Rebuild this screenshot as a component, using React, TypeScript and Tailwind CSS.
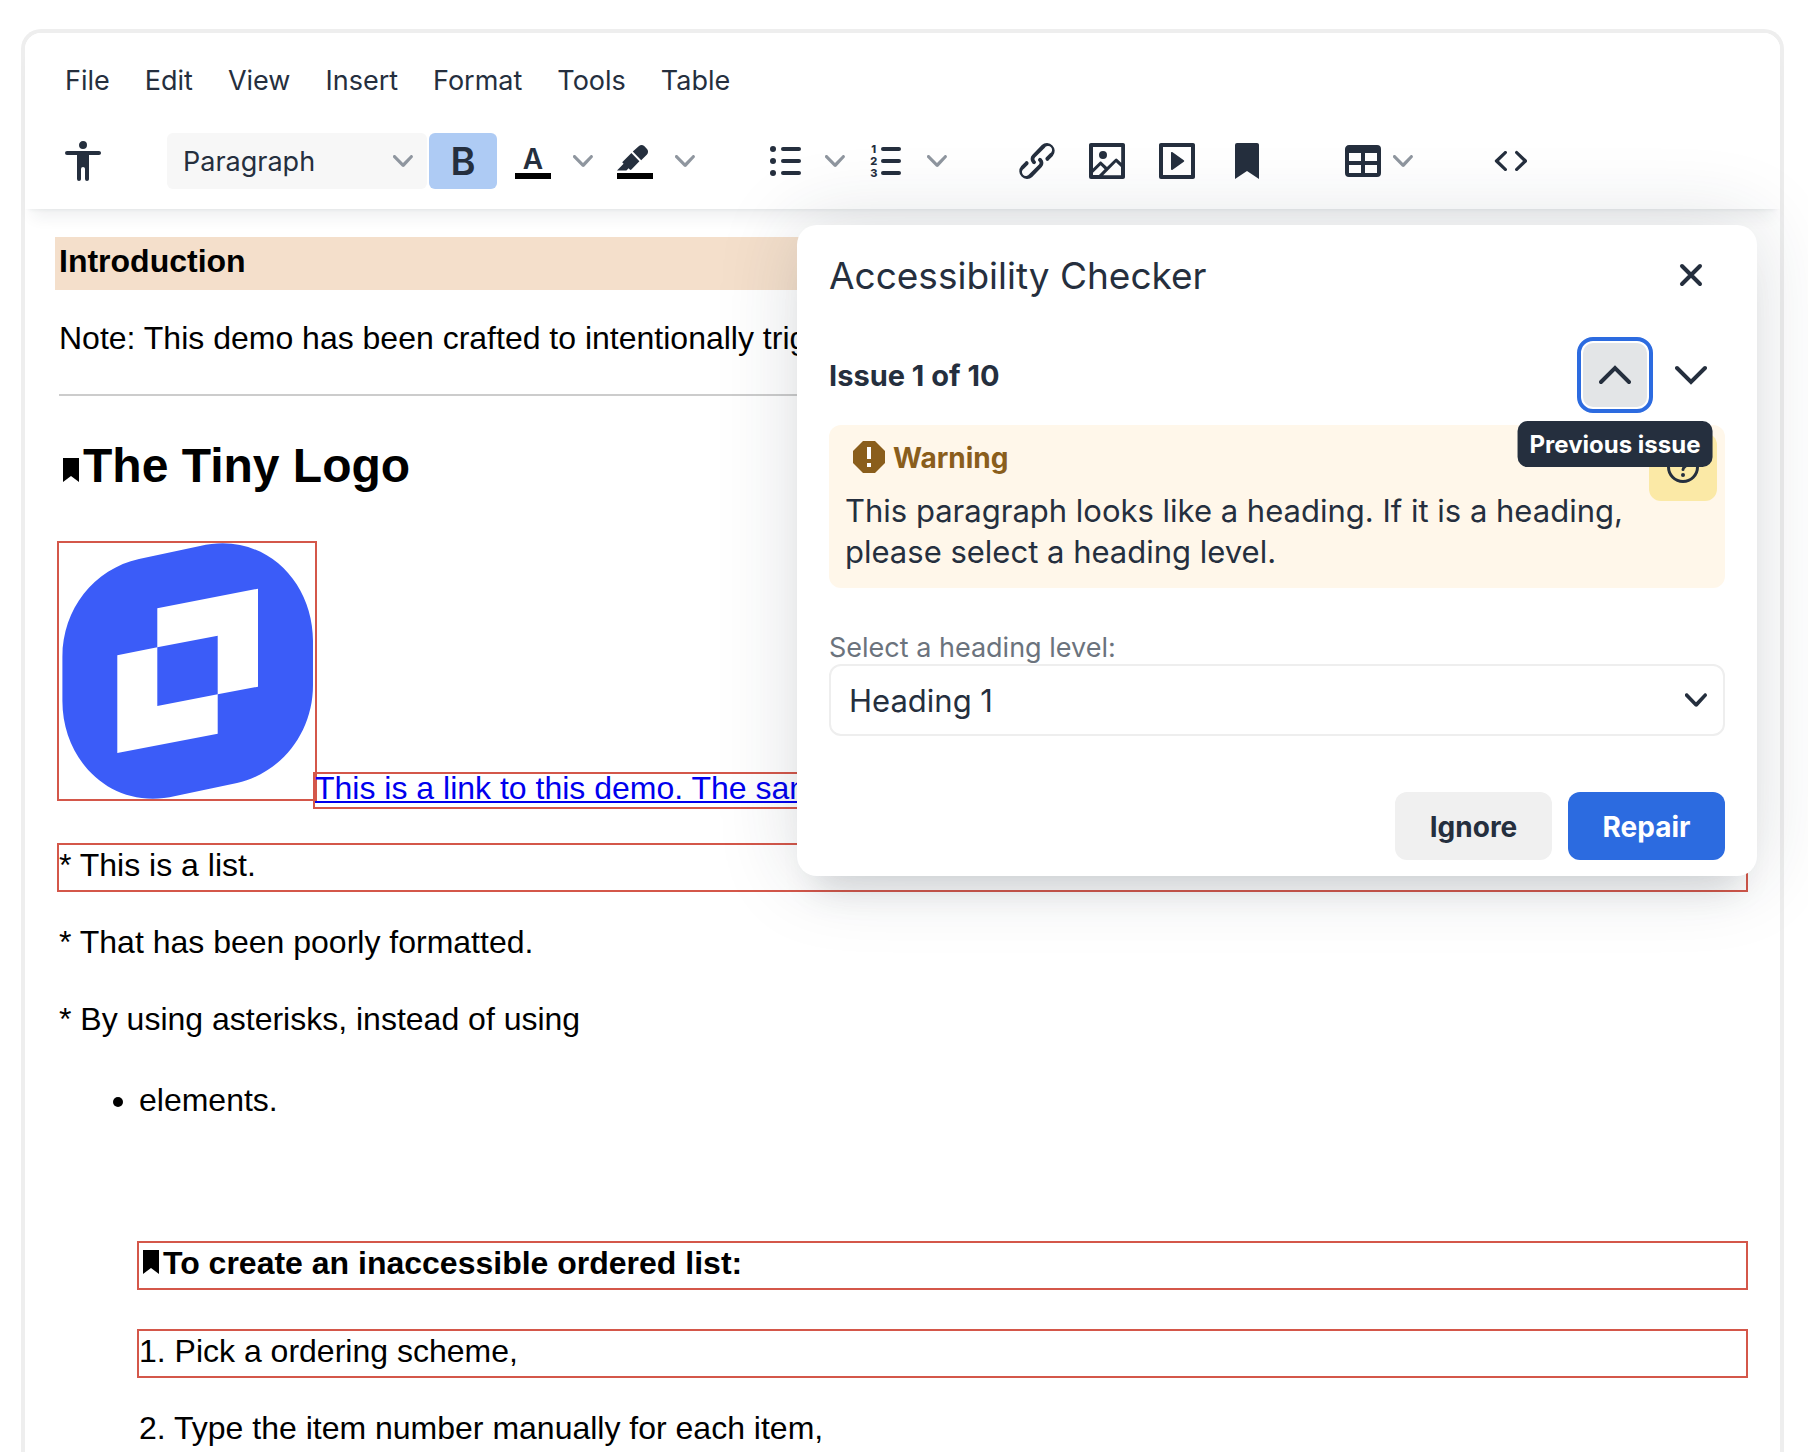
import type { ReactNode } from 'react';

const menus = ['File', 'Edit', 'View', 'Insert', 'Format', 'Tools', 'Table'];

function Chevron({ className }: { className: string }) {
  return (
    <svg viewBox="0 0 10 10" fill="currentColor" className={className} aria-hidden="true">
      <path d="M8.7 2.2c.3-.3.8-.3 1 0 .4.4.4.9 0 1.2L5.7 7.8c-.3.3-.9.3-1.2 0L.2 3.4a.8.8 0 0 1 0-1.2c.3-.3.8-.3 1.1 0L5 6l3.7-3.8Z" />
    </svg>
  );
}

function Icon({ children }: { children: ReactNode }) {
  return (
    <svg viewBox="0 0 24 24" fill="currentColor" fillRule="evenodd" className="size-12" aria-hidden="true">
      {children}
    </svg>
  );
}

function ToolButton({ label, active, children }: { label: string; active?: boolean; children: ReactNode }) {
  return (
    <button
      type="button"
      aria-label={label}
      aria-pressed={active}
      className={
        active
          ? 'flex h-14 w-[68px] items-center justify-center rounded-md bg-[#aecbf4]'
          : 'flex h-14 w-[68px] items-center justify-center rounded-md'
      }
    >
      {children}
    </button>
  );
}

function SplitButton({ label, children }: { label: string; children: ReactNode }) {
  return (
    <div className="flex">
      <ToolButton label={label}>{children}</ToolButton>
      <button type="button" aria-label={`${label} options`} className="flex h-14 w-8 items-center justify-center text-[#8f969f]">
        <Chevron className="size-5" />
      </button>
    </div>
  );
}

function Group({ children }: { children: ReactNode }) {
  return <div className="flex gap-0.5">{children}</div>;
}

function Toolbar() {
  return (
    <div className="flex gap-[50px] pb-5 pl-6">
      <Group>
        <ToolButton label="Accessibility checker">
          <Icon>
            <path d="M12 2a2 2 0 0 1 2 2 2 2 0 0 1-2 2 2 2 0 0 1-2-2c0-1.1.9-2 2-2Zm8 7h-5v12c0 .6-.4 1-1 1a1 1 0 0 1-1-1v-5c0-.6-.4-1-1-1a1 1 0 0 0-1 1v5c0 .6-.4 1-1 1a1 1 0 0 1-1-1V9H4a1 1 0 1 1 0-2h16c.6 0 1 .4 1 1s-.4 1-1 1Z" />
          </Icon>
        </ToolButton>
      </Group>
      <Group>
        <div className="relative">
          <select
            aria-label="Block format"
            className="h-14 w-[260px] appearance-none rounded-md bg-[#f7f7f7] pt-0.5 pl-4 text-[27px] leading-[34px]"
          >
            <option>Paragraph</option>
          </select>
          <Chevron className="pointer-events-none absolute top-[18px] right-3.5 size-5 text-[#8f969f]" />
        </div>
        <ToolButton label="Bold" active>
          <span className="text-[38px] leading-none font-semibold">B</span>
        </ToolButton>
        <SplitButton label="Text color">
          <span className="flex flex-col items-center pt-0.5">
            <span className="text-[28px] leading-7 font-semibold">A</span>
            <span className="h-1.5 w-9 bg-black" />
          </span>
        </SplitButton>
        <SplitButton label="Background color">
          <Icon>
            <path fill="#000" d="M3 18h18v3H3z" />
            <path d="M7.7 16.700H3l3.3-3.3-.7-.8L10.2 8l4 4.1-4 4.2c-.2.2-.6.2-.8 0l-.6-.7-1.1 1.1zM15.1 11.6 10.9 7.3 14 4.5a2 2 0 0 1 2.6 0L18 6c.7.7.7 2 0 2.700z" />
          </Icon>
        </SplitButton>
      </Group>
      <Group>
        <SplitButton label="Bullet list">
          <Icon>
            <rect x="10" y="5" width="10" height="2" rx="1" />
            <rect x="10" y="11" width="10" height="2" rx="1" />
            <rect x="10" y="17" width="10" height="2" rx="1" />
            <circle cx="6" cy="6" r="1.5" />
            <circle cx="6" cy="12" r="1.5" />
            <circle cx="6" cy="18" r="1.5" />
          </Icon>
        </SplitButton>
        <SplitButton label="Numbered list">
          <Icon>
            <rect x="9" y="5" width="10" height="2" rx="1" />
            <rect x="9" y="11" width="10" height="2" rx="1" />
            <rect x="9" y="17" width="10" height="2" rx="1" />
            <text x="5.4" y="8" fontSize="5.5" fontWeight="800" textAnchor="middle">1</text>
            <text x="5.4" y="14" fontSize="5.5" fontWeight="800" textAnchor="middle">2</text>
            <text x="5.4" y="20" fontSize="5.5" fontWeight="800" textAnchor="middle">3</text>
          </Icon>
        </SplitButton>
      </Group>
      <Group>
        <ToolButton label="Link">
          <Icon>
            <path d="M6.2 12.3a1 1 0 0 1 1.4 1.4l-2 2a2 2 0 1 0 2.6 2.8l4.8-4.8a1 1 0 0 0 0-1.4 1 1 0 1 1 1.4-1.3 2.9 2.9 0 0 1 0 4L9.6 20a3.9 3.9 0 0 1-5.5-5.5l2-2Zm11.6-.6a1 1 0 0 1-1.4-1.4l2-2a2 2 0 1 0-2.6-2.8L11 10.3a1 1 0 0 0 0 1.4A1 1 0 1 1 9.6 13a2.9 2.9 0 0 1 0-4L14.4 4a3.9 3.9 0 0 1 5.5 5.5l-2 2Z" />
          </Icon>
        </ToolButton>
        <ToolButton label="Image">
          <Icon>
            <path
              fillRule="nonzero"
              d="m5 15.7 3.3-3.2c.3-.3.7-.3 1 0L12 15l4.1-4c.3-.4.8-.4 1 0l2 1.9V5H5v10.7ZM5 18V19h3l2.8-2.9-2-2L5 17.9Zm14-3-2.5-2.4-6.4 6.5H19v-4ZM4 3h16c.6 0 1 .4 1 1v16c0 .6-.4 1-1 1H4a1 1 0 0 1-1-1V4c0-.6.4-1 1-1Zm6 8a2 2 0 1 0 0-4 2 2 0 0 0 0 4Z"
            />
          </Icon>
        </ToolButton>
        <ToolButton label="Media">
          <Icon>
            <path d="M4 3h16c.6 0 1 .4 1 1v16c0 .6-.4 1-1 1H4a1 1 0 0 1-1-1V4c0-.6.4-1 1-1Zm1 2v14h14V5H5Zm4.8 2.6 5.6 4a.5.5 0 0 1 0 .8l-5.6 4A.5.5 0 0 1 9 16V8a.5.5 0 0 1 .8-.4Z" />
          </Icon>
        </ToolButton>
        <ToolButton label="Anchor">
          <Icon>
            <path d="M6 4v17l6-4 6 4V4c0-.6-.4-1-1-1H7a1 1 0 0 0-1 1Z" />
          </Icon>
        </ToolButton>
      </Group>
      <Group>
        <button type="button" aria-label="Table" className="flex h-14 w-24 items-center gap-1.5 pl-2">
          <Icon>
            <path d="M19 4a2 2 0 0 1 2 2v12a2 2 0 0 1-2 2H5a2 2 0 0 1-2-2V6c0-1.1.9-2 2-2h14ZM5 14v4h6v-4H5Zm14 0h-6v4h6v-4Zm0-6h-6v4h6V8ZM5 12h6V8H5v4Z" />
          </Icon>
          <Chevron className="size-5 text-[#8f969f]" />
        </button>
      </Group>
      <Group>
        <ToolButton label="Source code">
          <Icon>
            <path d="M9.8 15.7c.3.3.3.8 0 1-.3.4-.9.4-1.2 0l-4.4-4.1a.8.8 0 0 1 0-1.2l4.4-4.2c.3-.3.9-.3 1.2 0 .3.3.3.8 0 1.1L6 12l3.8 3.7ZM14.2 15.7c-.3.3-.3.8 0 1 .4.4.9.4 1.2 0l4.4-4.1c.3-.3.3-.9 0-1.2l-4.4-4.2a.8.8 0 0 0-1.2 0c-.3.3-.3.8 0 1.1L18 12l-3.8 3.7Z" />
          </Icon>
        </ToolButton>
      </Group>
    </div>
  );
}

function Anchor() {
  return (
    <svg viewBox="0 0 24 24" className="inline size-6 align-baseline" aria-hidden="true">
      <path d="M4 0h16v24l-8-6-8 6z" />
    </svg>
  );
}

function TinyLogo() {
  return (
    <svg
      viewBox="0 0 256 256"
      role="img"
      aria-label="Tiny logo"
      className="inline size-64 align-baseline outline-2 outline-[#d4574a]"
    >
      <path
        fill="#3b5cf8"
        d="M80 16 141 3C205-12 254 38 254 98v44c0 48-32 88-76 98l-61.600 13C52.400 268 3.400 218 3.400 158v-44C3.400 66 35 26 80 16Z"
      />
      <path
        fill="#fff"
        d="M98.300 65.300 199 45.700v98l-40.300 7.600V92.700l-60.400 11.600zM58.300 112.300l40-8V163l60.400-11.700v39.400L58.300 210z"
      />
    </svg>
  );
}

function Document() {
  return (
    <article className="min-h-0 flex-1 overflow-hidden px-[34px] pt-8 font-['Liberation_Sans',Arial,sans-serif] text-[32px] leading-[41px] text-black">
      <p className="bg-[#f4dfcb] pb-1 font-bold outline-4 outline-[#f4dfcb]">Introduction</p>
      <p className="mt-8 pb-1">Note: This demo has been crafted to intentionally trigger the checker.</p>
      <hr className="mt-[31px] border-t-2 border-[#ccc]" />
      <h2 className="mt-10 pb-2 text-[48px] leading-[59px] font-bold">
        <Anchor />
        The Tiny Logo
      </h2>
      <p className="mt-10 pb-1 whitespace-nowrap">
        <TinyLogo />
        <a
          href="#demo"
          className="inline-block pb-1 leading-[29px] text-[#0000ee] underline decoration-2 underline-offset-2 outline-2 outline-[#d4574a]"
        >
          This is a link to this demo. The same demo, in full.
        </a>
      </p>
      <p className="mt-8 pb-1 outline-2 outline-[#d4574a]">* This is a list.</p>
      <p className="mt-8 pb-1">* That has been poorly formatted.</p>
      <p className="mt-8 pb-1">* By using asterisks, instead of using</p>
      <ul className="mt-9 list-disc pl-20">
        <li>
          <p className="pb-1">elements.</p>
          <h4 className="mt-[118px] pb-1 font-bold outline-2 outline-[#d4574a]">
            <Anchor />
            To create an inaccessible ordered list:
          </h4>
          <p className="mt-[43px] pb-1 outline-2 outline-[#d4574a]">1. Pick a ordering scheme,</p>
          <p className="mt-8 pb-1">2. Type the item number manually for each item,</p>
        </li>
      </ul>
    </article>
  );
}

function CheckerDialog() {
  return (
    <section
      role="dialog"
      aria-labelledby="checker-title"
      className="absolute top-48 right-[23px] z-20 w-[960px] rounded-[20px] bg-white px-8 py-4 shadow-[0_32px_32px_-20px_rgba(34,47,62,0.15),0_0_80px_2px_rgba(34,47,62,0.15)]"
    >
      <header className="flex h-[68px] items-center justify-between">
        <h1 id="checker-title" className="pt-0.5 text-[37px]">Accessibility Checker</h1>
        <button type="button" aria-label="Close" className="flex size-[68px] items-center justify-center">
          <svg viewBox="0 0 24 24" className="size-6" fill="none" stroke="currentColor" strokeWidth="4" strokeLinecap="round" aria-hidden="true">
            <path d="m3 3 18 18M21 3 3 21" />
          </svg>
        </button>
      </header>

      <div className="mt-8 flex h-[68px] items-center gap-2">
        <p className="flex-1 pt-0.5 text-[29px] font-bold">Issue 1 of 10</p>
        <div className="relative z-10">
          <button
            type="button"
            aria-label="Previous issue"
            aria-describedby="prev-tip"
            className="m-0.5 flex size-16 items-center justify-center rounded-[10px] bg-[#e3e5e7] outline-4 outline-offset-2 outline-[#2c6be0]"
          >
            <svg viewBox="0 0 32 20" className="h-5 w-8" fill="none" stroke="currentColor" strokeWidth="4" strokeLinecap="round" aria-hidden="true">
              <path d="M2 17 16 3l14 14" />
            </svg>
          </button>
          <span
            id="prev-tip"
            role="tooltip"
            className="absolute top-20 left-1/2 flex h-[46px] -translate-x-1/2 items-center rounded-[10px] bg-[#252f3e] px-3 pt-0.5 text-2xl font-bold whitespace-nowrap text-white"
          >
            Previous issue
          </span>
        </div>
        <button type="button" aria-label="Next issue" className="flex size-[68px] items-center justify-center">
          <svg viewBox="0 0 32 20" className="h-5 w-8" fill="none" stroke="currentColor" strokeWidth="4" strokeLinecap="round" aria-hidden="true">
            <path d="m2 3 14 14L30 3" />
          </svg>
        </button>
      </div>

      <div className="relative mt-4 rounded-xl bg-[#fff7ea] px-4 pt-3 pb-4">
        <div className="flex h-10 items-center gap-2 pl-2 text-[#8a5e1c]">
          <svg viewBox="0 0 32 32" className="size-8" aria-hidden="true">
            <path fill="currentColor" d="M10 0h12l10 10v12L22 32H10L0 22V10z" />
            <path fill="#fff" d="M14 6h4v12h-4zM14 22h4v4h-4z" />
          </svg>
          <span className="pt-0.5 text-[28px] font-bold">Warning</span>
        </div>
        <p className="mt-[13px] text-[31px] leading-[41px]">
          This paragraph looks like a heading. If it is a heading, please select a heading level.
        </p>
        <button
          type="button"
          aria-label="More information"
          className="absolute top-2 right-2 flex size-[68px] items-center justify-center rounded-xl bg-[#fbe9a6]"
        >
          <svg viewBox="0 0 32 32" className="size-8" fill="none" stroke="currentColor" strokeWidth="3" aria-hidden="true">
            <circle cx="16" cy="16" r="14.500" />
            <path strokeLinecap="round" d="M12 12.500c0-5 8-5 8 0 0 3-4 3-4 6" />
            <circle cx="16" cy="24" r="2" fill="currentColor" stroke="none" />
          </svg>
        </button>
      </div>

      <label htmlFor="heading-level" className="mt-[43px] block text-[27px] leading-[33px] text-[#6b737d]">
        Select a heading level:
      </label>
      <div className="relative">
        <select
          id="heading-level"
          className="block h-18 w-full appearance-none rounded-xl border-2 border-[#eee] bg-white pt-0.5 pl-[18px] text-[31px] leading-[40px]"
        >
          <option>Heading 1</option>
        </select>
        <Chevron className="pointer-events-none absolute top-[25px] right-[18px] size-[22px]" />
      </div>

      <footer className="mt-14 flex justify-end gap-4">
        <button type="button" className="h-[68px] w-[157px] rounded-xl bg-[#f0f0f0] pt-0.5 text-[28px] font-bold">
          Ignore
        </button>
        <button type="button" className="h-[68px] w-[157px] rounded-xl bg-[#2c6be0] pt-0.5 text-[28px] font-bold text-white">
          Repair
        </button>
      </footer>
    </section>
  );
}

export default function App() {
  return (
    <div className="h-screen overflow-hidden bg-white pt-[29px] pr-6 pl-[21px] font-['Inter',sans-serif] text-[#252f3e]">
      <main className="relative flex h-full flex-col rounded-t-[20px] border-4 border-b-0 border-[#eee]">
        <header className="relative z-10 rounded-t-2xl bg-white shadow-[0_4px_4px_-4px_rgba(34,47,62,0.1),0_16px_16px_-8px_rgba(34,47,62,0.07)]">
          <nav className="flex gap-[3px] pt-5 pb-[26px] pl-6">
            {menus.map((m) => (
              <button key={m} type="button" className="h-[54px] px-4 pt-0.5 text-[27px]">
                {m}
              </button>
            ))}
          </nav>
          <Toolbar />
        </header>
        <Document />
        <CheckerDialog />
      </main>
    </div>
  );
}
